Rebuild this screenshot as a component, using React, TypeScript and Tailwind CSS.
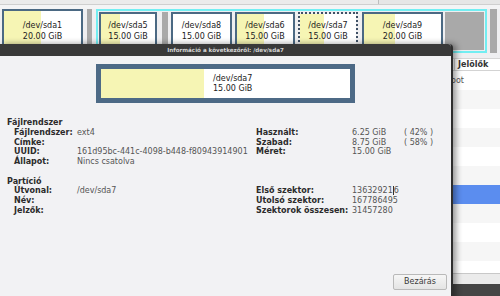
import React from "react";

type P = { w: number; used: number; name: string; size: string; dashed?: boolean };

function Part({ w, used, name, size, dashed }: P) {
  return (
    <div
      className={
        "shrink-0 border-2 " +
        (dashed ? "border-dotted border-[#3f5166]" : "border-solid border-[#4b6983]")
      }
      style={{ width: w }}
    >
      <div
        className="h-full flex flex-col items-center justify-center text-[8px] leading-[11px] text-[#222]"
        style={{
          background: `linear-gradient(to right, #f6f5b4 ${used}px, #ffffff ${used}px)`,
        }}
      >
        <span>{name}</span>
        <span>{size}</span>
      </div>
    </div>
  );
}

function Gap({ w }: { w: number }) {
  return <div className="shrink-0" style={{ width: w }} />;
}

function Unalloc({ w }: { w: number }) {
  return <div className="shrink-0 bg-[#a9a9a9]" style={{ width: w }} />;
}

const L = "font-bold text-[#2b2b2b]";
const V = "text-[#555]";

function Row({
  title,
  label,
  value,
  rlabel,
  rvalue,
  pct,
  caret,
}: {
  title?: string;
  label?: string;
  value?: string;
  rlabel?: string;
  rvalue?: string;
  pct?: string;
  caret?: boolean;
}) {
  return (
    <div className="flex h-[9.75px] leading-[9.75px] whitespace-nowrap">
      <div className="w-[249px] flex shrink-0">
        {title ? (
          <span className={L}>{title}</span>
        ) : label ? (
          <>
            <span className={"w-[70px] pl-[7px] shrink-0 " + L}>{label}</span>
            <span className={V}>{value}</span>
          </>
        ) : null}
      </div>
      {rlabel ? (
        <div className="flex">
          <span className={"w-[96px] shrink-0 " + L}>{rlabel}</span>
          <span className={"w-[52px] shrink-0 " + V}>
            {caret ? (
              <>
                13632921
                <span className="inline-block w-px h-[9px] bg-[#333] align-middle -mt-[1px]" />
                6
              </>
            ) : (
              rvalue
            )}
          </span>
          {pct ? <span className={V}>{pct}</span> : null}
        </div>
      ) : null}
    </div>
  );
}

export default function App() {
  const rows = Array.from({ length: 11 });
  return (
    <div className="relative w-[500px] h-[296px] overflow-hidden bg-[#efeff1] font-['DejaVu_Sans',sans-serif] text-[8px]">
      {/* background main window */}
      <div className="flex flex-col h-full">
        <div className="h-[9px] shrink-0 flex flex-col">
          <div className="h-[5px] bg-[#ebebeb] border-b border-[#cfcfcf] flex justify-end">
            <div className="w-[122px] h-full border-l border-[#bdbdbd] bg-[#e6e6e6]" />
          </div>
          <div className="flex-1 bg-[#f4f4f5]" />
        </div>
        {/* partition bar */}
        <div className="h-[44px] shrink-0 flex pl-[2px]">
          <Part w={81} used={37} name="/dev/sda1" size="20.00 GiB" />
          <Gap w={4} />
          <Unalloc w={5} />
          <Gap w={4} />
          <div className="shrink-0 w-[391px] border-2 border-[#72eef2] p-[1px] flex">
            <Part w={58} used={19} name="/dev/sda5" size="15.00 GiB" />
            <Gap w={5} />
            <Unalloc w={6} />
            <Gap w={3} />
            <Part w={61} used={0} name="/dev/sda8" size="15.00 GiB" />
            <Gap w={3} />
            <Part w={60} used={27} name="/dev/sda6" size="15.00 GiB" />
            <Gap w={3} />
            <Part w={60} used={24} name="/dev/sda7" size="15.00 GiB" dashed />
            <Gap w={4} />
            <Part w={81} used={31} name="/dev/sda9" size="20.00 GiB" />
            <Gap w={2} />
            <Unalloc w={39} />
          </div>
          <Gap w={3} />
          <Unalloc w={7} />
        </div>
        <div className="h-[6px] shrink-0 border-b border-[#d6d6d6]" />
        {/* list header */}
        <div className="h-[12px] shrink-0 bg-white border-b border-[#d3d3d3] flex">
          <div className="w-[455px] shrink-0 border-r border-[#d3d3d3]" />
          <span className="pl-[3px] font-bold text-[#333] leading-[11px]">Jelölők</span>
        </div>
        <div className="flex-1 flex flex-col overflow-hidden bg-white border-b border-[#c8c8c8]">
          {rows.map((_, i) => (
            <div
              key={i}
              className={
                "h-[19px] shrink-0 flex items-center " +
                (i === 6 ? "bg-[#5b8def]" : i % 2 === 1 ? "bg-[#f6f6f6]" : "bg-white")
              }
            >
              <div className="w-[446px] shrink-0" />
              {i === 0 ? <span className="text-[#555]">boot</span> : null}
            </div>
          ))}
        </div>
        <div className="h-[10px] shrink-0 bg-[#ebebeb]" />
        <div className="h-[12px] shrink-0 bg-[#454545]" />
      </div>

      {/* dialog */}
      <div className="absolute left-0 top-[44px] w-[453px] h-[260px] bg-[#f2f2f4] border-r-2 border-[#2e2e2e] rounded-tr-[4px] shadow-[3px_0_6px_rgba(0,0,0,0.4)] flex flex-col">
        <div className="h-[12px] shrink-0 bg-[#393939] rounded-tr-[3px] flex items-center justify-center text-[5.6px] font-bold text-[#d6d6d6]">
          Információ a következőről: /dev/sda7
        </div>
        <div className="pt-[8px] flex justify-center shrink-0">
          <div className="w-[259px] h-[39px] border-[5px] border-[#4d6a86] flex">
            <div className="w-[103px] h-full bg-[#f6f5b4]" />
            <div className="flex-1 bg-white pl-[9px] flex flex-col justify-center text-[8px] leading-[9.5px] text-[#222]">
              <span>/dev/sda7</span>
              <span>15.00 GiB</span>
            </div>
          </div>
        </div>
        <div className="mt-[15px] pl-[7px] flex flex-col shrink-0">
          <Row title="Fájlrendszer" />
          <Row label="Fájlrendszer:" value="ext4" rlabel="Használt:" rvalue="6.25 GiB" pct="( 42% )" />
          <Row label="Címke:" value="" rlabel="Szabad:" rvalue="8.75 GiB" pct="( 58% )" />
          <Row label="UUID:" value="161d95bc-441c-4098-b448-f80943914901" rlabel="Méret:" rvalue="15.00 GiB" />
          <Row label="Állapot:" value="Nincs csatolva" />
          <Row />
          <Row title="Partíció" />
          <Row label="Útvonal:" value="/dev/sda7" rlabel="Első szektor:" caret />
          <Row label="Név:" value="" rlabel="Utolsó szektor:" rvalue="167786495" />
          <Row label="Jelzők:" value="" rlabel="Szektorok összesen:" rvalue="31457280" />
        </div>
        <div className="mt-[58px] flex justify-end pr-[4px] shrink-0">
          <button className="w-[54px] h-[16px] rounded-[2px] border border-[#b9b9b9] bg-[linear-gradient(#f6f6f6,#e4e4e4)] text-[8px] text-[#3a3a3a] leading-[14px]">
            Bezárás
          </button>
        </div>
      </div>
    </div>
  );
}
